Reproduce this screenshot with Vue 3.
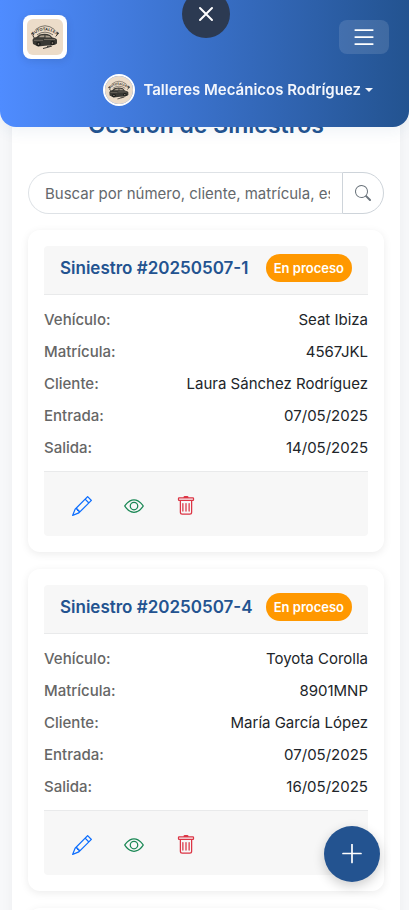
<script setup>
import { ref } from 'vue'

const search = ref('')
const claims = [
  { id: '20250507-1', status: 'En proceso', fields: [['Vehículo', 'Seat Ibiza'], ['Matrícula', '4567JKL'], ['Cliente', 'Laura Sánchez Rodríguez'], ['Entrada', '07/05/2025'], ['Salida', '14/05/2025']] },
  { id: '20250507-4', status: 'En proceso', fields: [['Vehículo', 'Toyota Corolla'], ['Matrícula', '8901MNP'], ['Cliente', 'María García López'], ['Entrada', '07/05/2025'], ['Salida', '16/05/2025']] },
  { id: '', status: '', fields: [] }
]
</script>

<template>
  <div class="page">
    <header class="topbar">
      <div class="bar-row">
        <a class="brand" href="#" aria-label="Inicio">
          <svg viewBox="0 0 36 36">
            <g id="emblem">
              <rect width="36" height="36" fill="#ecdcc9" />
              <path id="arc" d="M6.500 15.500Q18 7.500 29.500 15.500" fill="none" />
              <path d="M8.500 10.500Q18 3 27.500 10.500M10 15.800Q18 10.500 26 15.800" fill="none" stroke="#4b4740" stroke-width=".7" />
              <text font-family="Liberation Sans, sans-serif" font-size="4" font-weight="700" fill="#252522"><textPath href="#arc" startOffset="50%" text-anchor="middle">AUTOTALLER</textPath></text>
              <path d="M4 15l2-.5.8 1.300-1 .7 1.500 2.500M31 14l-1 2-1.300 1.500M30 13.500l1.700 1.200" fill="none" stroke="#34332f" stroke-width="1" />
              <path d="M5.500 21q.5-2.500 4-3l3-2.500q6-1.500 10.500.4l2.500 2.600q4 .7 4.500 2.400v3.500l-2 1.300-17 1.800-5-2.500z" fill="#3a3934" />
              <path d="M11.500 18.200l2.300-1.600 3.600-.4v2zM18.500 16.200l4 .7 1.500 1.500h-5.500z" fill="#a89c8c" />
              <path d="M7 21.300h9M17 20.500h11" stroke="#8d8377" stroke-width=".7" />
              <circle cx="11.500" cy="25" r="2.300" fill="#1b1c1a" /><circle cx="25.500" cy="24" r="2.200" fill="#1b1c1a" />
              <circle cx="11.500" cy="25" r=".8" fill="#a89c8c" /><circle cx="25.500" cy="24" r=".8" fill="#a89c8c" />
              <path d="M16 29.500l4-1 5-1.500M20 27.500l4-.7" stroke="#3c3a35" stroke-width="1" fill="none" />
            </g>
          </svg>
        </a>
        <button class="menu" type="button" aria-label="Menú">
          <svg viewBox="0 0 16 16" fill="currentColor"><path fill-rule="evenodd" d="M2.500 12a.5.5 0 0 1 .5-.5h10a.5.5 0 0 1 0 1H3a.5.5 0 0 1-.5-.5m0-4a.5.5 0 0 1 .5-.5h10a.5.5 0 0 1 0 1H3a.5.5 0 0 1-.5-.5m0-4a.5.5 0 0 1 .5-.5h10a.5.5 0 0 1 0 1H3a.5.5 0 0 1-.5-.5" /></svg>
        </button>
      </div>
      <button class="account" type="button">
        <svg class="avatar" viewBox="0 0 36 36"><use href="#emblem" /></svg>
        <span>Talleres Mecánicos Rodríguez</span>
        <i class="caret"></i>
      </button>
      <button class="close" type="button" aria-label="Cerrar">
        <svg viewBox="0 0 16 16" fill="none" stroke="currentColor" stroke-width="2" stroke-linecap="round"><path d="M2 2l12 12M14 2L2 14" /></svg>
      </button>
    </header>

    <main class="content">
      <h1>Gestión de Siniestros</h1>
      <form class="search" role="search" @submit.prevent>
        <input v-model="search" type="text" aria-label="Buscar siniestros" placeholder="Buscar por número, cliente, matrícula, estado..." />
        <button type="submit" aria-label="Buscar">
          <svg viewBox="0 0 16 16" fill="currentColor"><path d="M11.742 10.344a6.500 6.500 0 1 0-1.397 1.398h-.001q.044.06.098.115l3.850 3.850a1 1 0 0 0 1.415-1.414l-3.850-3.850a1 1 0 0 0-.115-.1zM12 6.500a5.500 5.500 0 1 1-11 0 5.500 5.500 0 0 1 11 0" /></svg>
        </button>
      </form>

      <div class="list">
        <article v-for="(claim, i) in claims" :key="i" class="card">
          <div class="card-head">
            <h2 v-if="claim.id">Siniestro #{{ claim.id }}</h2>
            <span v-if="claim.status" class="badge">{{ claim.status }}</span>
          </div>
          <dl>
            <div v-for="[label, value] in claim.fields" :key="label" class="field">
              <dt>{{ label }}:</dt>
              <dd>{{ value }}</dd>
            </div>
          </dl>
          <div class="actions">
            <button class="edit" type="button" aria-label="Editar">
              <svg viewBox="0 0 16 16" fill="currentColor"><path d="M12.146.146a.5.5 0 0 1 .708 0l3 3a.5.5 0 0 1 0 .708l-10 10a.5.5 0 0 1-.168.110l-5 2a.5.5 0 0 1-.65-.65l2-5a.5.5 0 0 1 .110-.168zM11.207 2.500 13.500 4.793 14.793 3.500 12.500 1.207zm1.586 3L10.500 3.207 4 9.707V10h.5a.5.5 0 0 1 .5.5v.5h.5a.5.5 0 0 1 .5.5v.5h.293zm-9.761 5.175-.106.106-1.528 3.821 3.821-1.528.106-.106A.5.5 0 0 1 5 12.500V12h-.5a.5.5 0 0 1-.5-.5V11h-.5a.5.5 0 0 1-.468-.325" /></svg>
            </button>
            <button class="view" type="button" aria-label="Ver">
              <svg viewBox="0 0 16 16" fill="currentColor"><path d="M16 8s-3-5.500-8-5.500S0 8 0 8s3 5.500 8 5.500S16 8 16 8M1.173 8a13 13 0 0 1 1.660-2.043C4.120 4.668 5.880 3.500 8 3.500s3.879 1.168 5.168 2.457A13 13 0 0 1 14.828 8q-.086.130-.195.288c-.335.480-.830 1.120-1.465 1.755C11.879 11.332 10.119 12.500 8 12.500s-3.879-1.168-5.168-2.457A13 13 0 0 1 1.172 8z" /><path d="M8 5.500a2.500 2.500 0 1 0 0 5 2.500 2.500 0 0 0 0-5M4.500 8a3.500 3.500 0 1 1 7 0 3.500 3.500 0 0 1-7 0" /></svg>
            </button>
            <button class="remove" type="button" aria-label="Eliminar">
              <svg viewBox="0 0 16 16" fill="currentColor"><path d="M5.500 5.500A.5.5 0 0 1 6 6v6a.5.5 0 0 1-1 0V6a.5.5 0 0 1 .5-.5m2.500 0a.5.5 0 0 1 .5.5v6a.5.5 0 0 1-1 0V6a.5.5 0 0 1 .5-.5m3 .5a.5.5 0 0 0-1 0v6a.5.5 0 0 0 1 0z" /><path d="M14.500 3a1 1 0 0 1-1 1H13v9a2 2 0 0 1-2 2H5a2 2 0 0 1-2-2V4h-.5a1 1 0 0 1-1-1V2a1 1 0 0 1 1-1H6a1 1 0 0 1 1-1h2a1 1 0 0 1 1 1h3.500a1 1 0 0 1 1 1zM4.118 4 4 4.059V13a1 1 0 0 0 1 1h6a1 1 0 0 0 1-1V4.059L11.882 4zM2.500 3h11V2h-11z" /></svg>
            </button>
          </div>
        </article>
      </div>
    </main>

    <button class="fab" type="button" aria-label="Nuevo siniestro">
      <svg viewBox="0 0 20 20" stroke="currentColor" stroke-width="1.700"><path d="M1 9.500h18M10 .500v18" stroke-linecap="round" /></svg>
    </button>
  </div>
</template>

<style>
body {
  margin: 0;
  background: #f8f9fb;
}
</style>

<style scoped>
.page {
  height: 100vh;
  overflow: hidden;
  font-family: Inter, "Liberation Sans", sans-serif;
  font-size: 15px;
  line-height: 24px;
  color: #212529;
}
.page *,
.page *::before {
  box-sizing: border-box;
}
button {
  display: flex;
  align-items: center;
  justify-content: center;
  padding: 0;
  border: 0;
  background: none;
  font: inherit;
  cursor: pointer;
}
.topbar {
  position: fixed;
  z-index: 10;
  top: 0;
  left: 0;
  right: 0;
  padding: 15px 20px 21px 23px;
  border-radius: 0 0 16px 16px;
  background: linear-gradient(90deg, #4f8cff, #235390);
  box-shadow: 0 4px 16px rgba(35, 83, 144, 0.08);
}
.bar-row {
  display: flex;
  justify-content: space-between;
  align-items: center;
}
.brand {
  display: flex;
  width: 44px;
  height: 44px;
  padding: 4px;
  border-radius: 8px;
  background: #fff;
  box-shadow: 0 2px 8px rgba(0, 0, 0, 0.1);
}
.brand svg {
  width: 36px;
  height: 36px;
  border-radius: 6px;
}
.menu {
  width: 50px;
  height: 34px;
  border-radius: 8px;
  background: rgba(255, 255, 255, 0.12);
  color: #fff;
}
.menu svg {
  width: 28px;
  height: 28px;
}
.account {
  gap: 8px;
  margin: 15px 16px 0 auto;
  color: #f3f6fc;
  font-weight: 600;
  white-space: nowrap;
}
.avatar {
  width: 32px;
  height: 32px;
  border: 2px solid #fff;
  border-radius: 50%;
}
.caret {
  margin-left: -4px;
  border: 4px solid transparent;
  border-top-color: currentColor;
  border-bottom: 0;
}
.close {
  position: absolute;
  top: -10px;
  left: 50%;
  width: 48px;
  height: 48px;
  margin-left: -23px;
  border-radius: 50%;
  background: #2c3a52;
  color: #fff;
}
.close svg {
  width: 16px;
  height: 16px;
}
.content {
  margin: 0 9px 0 12px;
  padding: 110px 16px 16px;
  background: #fff;
  box-shadow: 0 0 16px rgba(0, 0, 0, 0.05);
}
h1 {
  margin: 0 0 31px;
  color: #235390;
  font-size: 23px;
  line-height: 31px;
  font-weight: 600;
  text-align: center;
}
.search {
  display: flex;
  height: 42px;
  margin-bottom: 16px;
}
.search input {
  flex: 1;
  min-width: 0;
  padding: 2px 12px 0 16px;
  border: 1px solid #dee2e6;
  border-right: 0;
  border-radius: 21px 0 0 21px;
  background: #fff;
  color: #212529;
  font: inherit;
}
.search input::placeholder {
  color: #64686c;
  opacity: 1;
}
.search button {
  width: 42px;
  border: 1px solid #ced4da;
  border-radius: 0 21px 21px 0;
  color: #6c757d;
}
.search svg {
  width: 16px;
  height: 16px;
}
.list {
  display: flex;
  flex-direction: column;
  gap: 17px;
}
.card {
  padding: 16px;
  border-radius: 12px;
  background: #fff;
  box-shadow: 0 2px 8px rgba(0, 0, 0, 0.08);
}
.card-head {
  display: flex;
  align-items: center;
  justify-content: space-between;
  min-height: 49px;
  padding: 0 16px 4px;
  border-bottom: 1px solid #e9eaeb;
  border-radius: 4px 4px 0 0;
  background: #f7f7f7;
}
h2 {
  margin: 0;
  color: #235390;
  font-size: 17px;
  line-height: 24px;
  font-weight: 600;
  white-space: nowrap;
}
.badge {
  padding: 4px 8px;
  border-radius: 14px;
  background: #ff9800;
  color: #fff;
  font-size: 13px;
  line-height: 20px;
  font-weight: 600;
  white-space: nowrap;
}
dl {
  margin: 0;
  padding: 9px 0 7px;
}
.field {
  display: flex;
  justify-content: space-between;
  padding: 4px 0;
}
dt {
  color: #666;
  font-weight: 500;
}
dd {
  margin: 0;
}
.actions {
  display: flex;
  align-items: center;
  gap: 16px;
  height: 65px;
  padding: 4px 20px 0;
  border-top: 1px solid #e9eaeb;
  border-radius: 0 0 4px 4px;
  background: #f7f7f7;
}
.actions button {
  width: 36px;
  height: 36px;
}
.actions svg {
  width: 20px;
  height: 20px;
}
.edit {
  color: #0d6efd;
}
.view {
  color: #198754;
}
.remove {
  color: #dc3545;
}
.fab {
  position: fixed;
  right: 29px;
  bottom: 28px;
  width: 56px;
  height: 56px;
  border-radius: 50%;
  background: #235390;
  color: #fff;
  box-shadow: 0 4px 12px rgba(0, 0, 0, 0.2);
}
.fab svg {
  width: 20px;
  height: 20px;
}
</style>
